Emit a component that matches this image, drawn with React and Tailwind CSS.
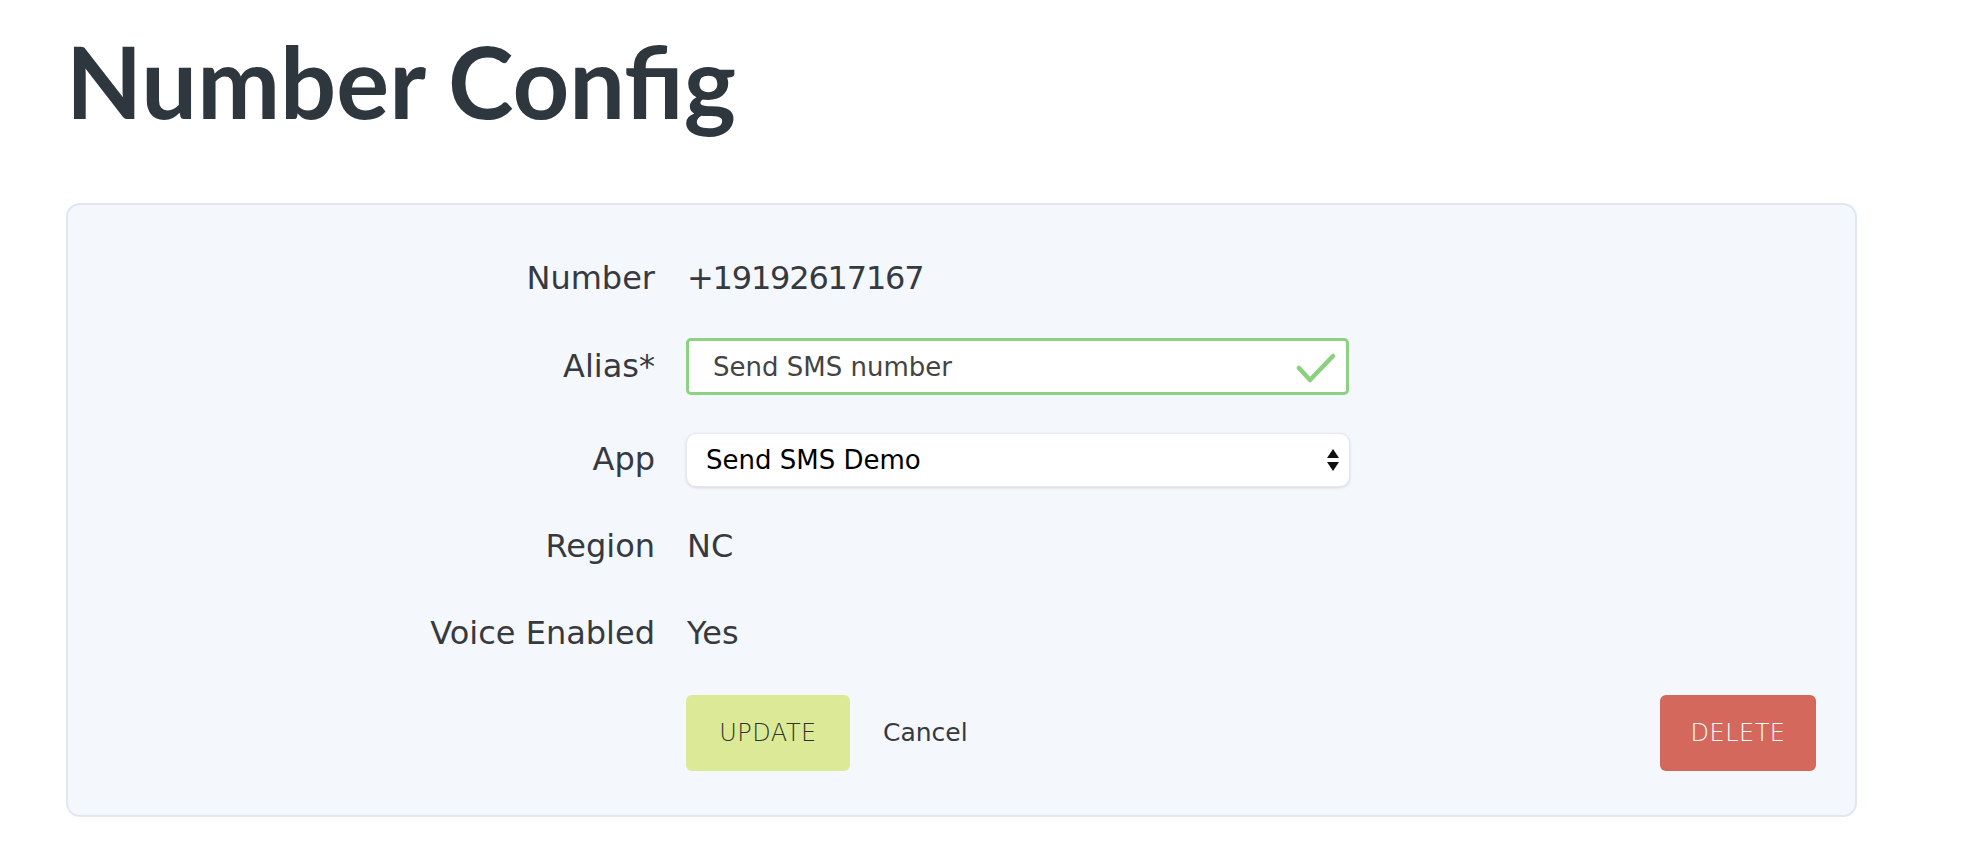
import React from "react";

const sans = { fontFamily: '"DejaVu Sans", "Open Sans", sans-serif' };

function Row({ label, children, className = "" }) {
  return (
    <div className={"flex h-[57px] items-center " + className}>
      <div className="w-[587px] shrink-0 pb-[2px] text-right text-[32px] leading-[40px] text-[#363a3f]">
        {label}
      </div>
      <div className="ml-[32px] flex items-center text-[32px] leading-[40px] text-[#363a3f]">
        {children}
      </div>
    </div>
  );
}

export default function App() {
  return (
    <div className="min-h-[868px] w-[1984px] bg-white" style={sans}>
      <div className="ml-[66px] w-[1791px]">
        <h1
          className="mt-[31px] text-[99px] font-bold leading-none text-[#2e363e]"
          style={{ fontFamily: 'Lato, "Liberation Sans", sans-serif' }}
        >
          Number Config
        </h1>

        <div className="mt-[73px] rounded-[14px] border-2 border-[#dfe8f2] bg-[#f4f7fc] pl-0 pr-[39px] pt-[45px] pb-[44px]">
          <Row label="Number">
            <span className="pb-[2px] tracking-[-1.2px]">+19192617167</span>
          </Row>

          <Row label="Alias*" className="mt-[31px]">
            <div className="-ml-[1px] flex h-[57px] w-[663px] items-center justify-between rounded-[5px] border-[3px] border-[#8dd183] bg-white pl-[24px] pr-[10px]">
              <span className="text-[26px] leading-none text-[#444]">Send SMS number</span>
              <svg width="40" height="32" viewBox="0 0 40 32" className="mt-[2px]">
                <polyline
                  points="3,16 14,28 37,4"
                  fill="none"
                  stroke="#8bd07f"
                  strokeWidth="4.5"
                  strokeLinecap="round"
                  strokeLinejoin="round"
                />
              </svg>
            </div>
          </Row>

          <Row label="App" className="mt-[36px]">
            <div className="-ml-[1px] flex h-[54px] w-[664px] items-center justify-between rounded-[10px] border border-[#e4e7eb] bg-white pl-[19px] pr-[10px] shadow-[0_1px_3px_rgba(0,0,0,0.12)]">
              <span className="text-[26px] leading-none text-black">Send SMS Demo</span>
              <svg width="12" height="22" viewBox="0 0 12 22">
                <polygon points="6,0 12,9 0,9" fill="#111" />
                <polygon points="0,13 12,13 6,22" fill="#111" />
              </svg>
            </div>
          </Row>

          <Row label="Region" className="mt-[30px]">
            <span className="pb-[2px]">NC</span>
          </Row>

          <Row label="Voice Enabled" className="mt-[30px]">
            <span className="pb-[2px]">Yes</span>
          </Row>

          <div className="mt-[33px] flex h-[76px] items-center">
            <div className="w-[587px] shrink-0" />
            <div className="ml-[31px] flex flex-1 items-center justify-between">
              <div className="flex items-center">
                <button className="h-[76px] w-[164px] rounded-[6px] bg-[#dce996] text-[24px] font-extralight tracking-[0.5px] text-[#2f342c]">
                  UPDATE
                </button>
                <span className="ml-[33px] text-[25px] text-[#363a3f]">Cancel</span>
              </div>
              <button className="h-[76px] w-[156px] rounded-[6px] bg-[#d4685c] text-[24px] font-extralight tracking-[0.5px] text-white">
                DELETE
              </button>
            </div>
          </div>
        </div>
      </div>
    </div>
  );
}
